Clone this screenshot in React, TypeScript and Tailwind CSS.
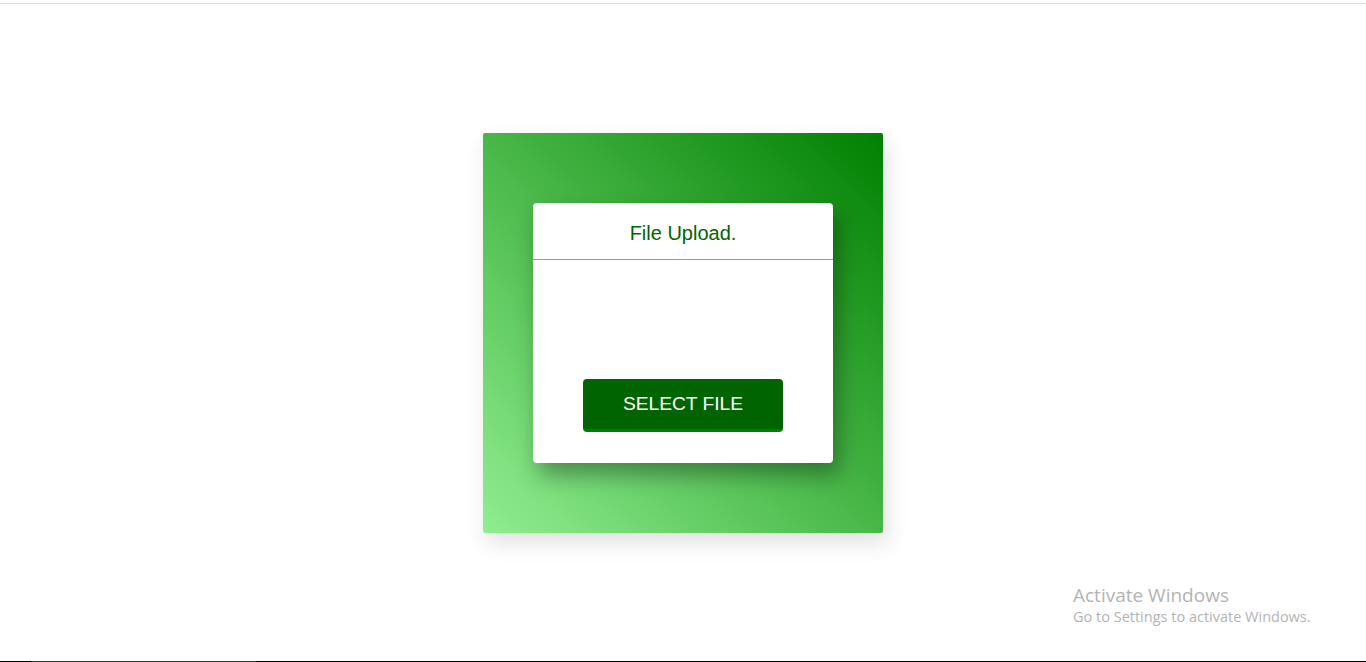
export default function App() {
  return (
    <div className="relative h-[662px] w-[1366px] overflow-hidden bg-white" style={{ fontFamily: '"Liberation Sans", Arial, sans-serif' }}>
      <div className="h-[3px]" />
      <div className="h-px bg-[#dcdcdc]" />
      <div className="mx-auto mt-[129px] h-[400px] w-[400px] rounded-[2px] bg-[linear-gradient(to_top_right,#90ee90,#008000)] pt-[70px] shadow-[4px_10px_22px_rgba(0,0,0,0.12)]">
        <div className="mx-auto flex h-[260px] w-[300px] flex-col rounded-[4px] bg-white shadow-[6px_12px_22px_rgba(0,0,0,0.35)]">
          <div className="flex h-[56px] items-center justify-center pt-[4px] text-[20px] text-[#006400]">File Upload.</div>
          <div className="h-px bg-[#999999]" />
          <div className="flex flex-1 justify-center pt-[119px]">
            <button className="h-[53px] w-[200px] rounded-[4px] border-b-[3px] border-[#008000] bg-[#006400] text-[19.2px] text-white">SELECT FILE</button>
          </div>
        </div>
      </div>
      <div className="absolute left-[1073px] top-[583px] text-[#b3b3b3]" style={{ fontFamily: '"Open Sans", "Noto Sans", sans-serif' }}>
        <div className="text-[19px] leading-[24px]">Activate Windows</div>
        <div className="text-[14.5px] leading-[20px]">Go to Settings to activate Windows.</div>
      </div>
      <div className="absolute bottom-0 left-0 flex h-px w-full bg-black">
        <div className="ml-[31px] h-px w-[225px] bg-[#333333]" />
      </div>
    </div>
  );
}
